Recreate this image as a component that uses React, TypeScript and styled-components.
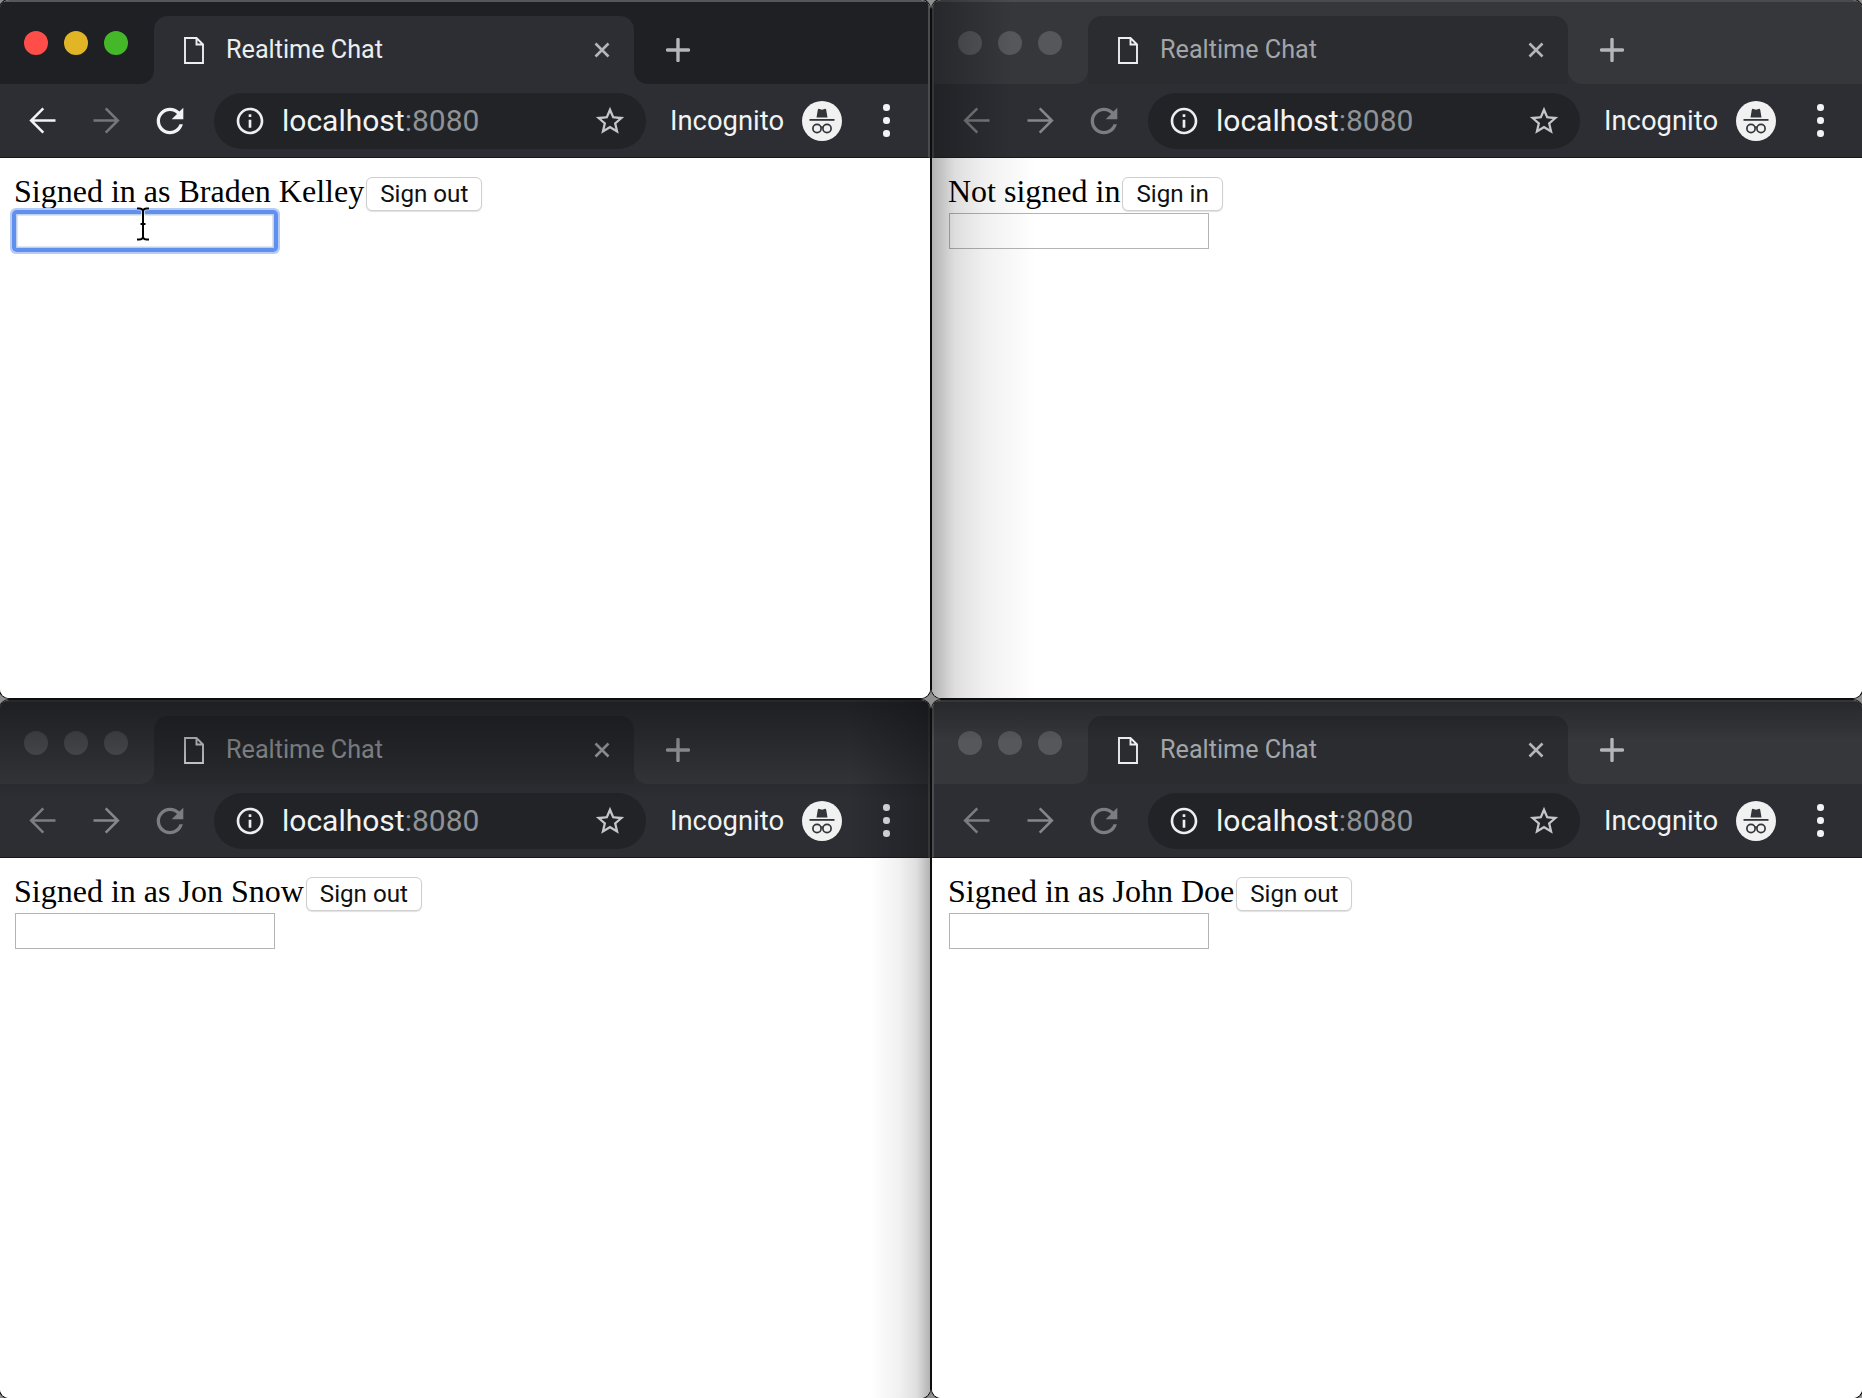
import React from "react";
import styled, { createGlobalStyle } from "styled-components";

const Global = createGlobalStyle`
  html, body { margin: 0; padding: 0; background: #8f8f8f; }
  #root { width: 1862px; height: 1398px; }
`;

const Desktop = styled.div`
  display: grid;
  grid-template-columns: 930px 930px;
  grid-template-rows: 698px 698px;
  gap: 2px;
  width: 1862px;
  height: 1398px;
  overflow: hidden;
  background: #8f8f8f;
`;

const Win = styled.section`
  position: relative;
  display: flex;
  flex-direction: column;
  overflow: hidden;
  border-radius: 9px;
  box-shadow: 0 0 0 1px #0d0d0e;
  background: #fff;
`;

type Edge = "left" | "right";

const TabStrip = styled.div<{ $focused: boolean; $edge: Edge }>`
  display: flex;
  height: 84px;
  flex: none;
  box-sizing: border-box;
  border-top: 2px solid ${(p) => (p.$focused ? "#56575a" : "#4a4b4e")};
  border-${(p) => p.$edge}: 2px solid #4a4b4e;
  background: linear-gradient(
    ${(p) => (p.$focused ? "#1f2024" : "#36373b")} 0 50px,
    #2c2e33 50px
  );
`;

const Cap = styled.div<{ $focused: boolean; $side: "left" | "right" }>`
  background: ${(p) => (p.$focused ? "#1f2024" : "#36373b")};
  ${(p) =>
    p.$side === "left"
      ? "width: 154px; flex: none; border-bottom-right-radius: 14px; padding: 29px 0 0 24px; gap: 16px;"
      : "flex: 1; border-bottom-left-radius: 14px; padding-left: 32px; padding-top: 36px;"}
  display: flex;
  align-items: flex-start;
  box-sizing: border-box;
`;

const Light = styled.span<{ $color: string }>`
  width: 24px;
  height: 24px;
  border-radius: 50%;
  background: ${(p) => p.$color};
`;

const Tab = styled.div<{ $focused: boolean }>`
  width: 480px;
  flex: none;
  box-sizing: border-box;
  margin-top: 14px;
  padding: 0 23px 0 30px;
  display: flex;
  align-items: center;
  border-radius: 14px 14px 0 0;
  background: ${(p) => (p.$focused ? "#2c2e33" : "#2b2c30")};
`;

const TabTitle = styled.span<{ $focused: boolean }>`
  flex: 1;
  margin-left: 22px;
  padding-bottom: 2px;
  font: 400 25.2px "Roboto", "Liberation Sans", sans-serif;
  color: ${(p) => (p.$focused ? "#eceef0" : "#a3a5a8")};
  white-space: nowrap;
`;

const TabIcon = styled.svg`
  flex: none;
  display: block;
`;

const Toolbar = styled.div<{ $edge: Edge }>`
  height: 74px;
  flex: none;
  box-sizing: border-box;
  display: flex;
  align-items: center;
  background: #2c2e33;
  border-bottom: 1px solid #17181a;
  border-${(p) => p.$edge}: 2px solid #4a4b4e;
  padding-left: 10px;
`;

const NavButton = styled.span`
  width: 64px;
  flex: none;
  display: flex;
  justify-content: center;
`;

const Omnibox = styled.div`
  margin-left: 12px;
  width: 432px;
  height: 56px;
  flex: none;
  box-sizing: border-box;
  border-radius: 28px;
  background: #212327;
  display: flex;
  align-items: center;
  padding: 0 19px 0 20px;
`;

const Url = styled.span`
  flex: 1;
  margin-left: 16px;
  padding-bottom: 1px;
  font: 400 30px "Roboto", "Liberation Sans", sans-serif;
  color: #f1f3f4;
`;

const Port = styled.span`
  color: #8f9296;
`;

const Badge = styled.span`
  margin-left: 24px;
  font: 400 27.4px "Roboto", "Liberation Sans", sans-serif;
  color: #f1f3f4;
  width: 132px;
  flex: none;
`;

const Avatar = styled.span`
  width: 40px;
  height: 40px;
  flex: none;
  border-radius: 50%;
  background: #f1f1f1;
  display: flex;
  align-items: center;
  justify-content: center;
`;

const Kebab = styled.span`
  margin-left: 41px;
  flex: none;
  display: flex;
  flex-direction: column;
  gap: 6.5px;
`;

const Dot = styled.i`
  display: block;
  width: 6.5px;
  height: 6.5px;
  border-radius: 50%;
  background: #f1f3f4;
`;

const Page = styled.main<{ $edge: Edge }>`
  position: relative;
  flex: 1;
  background: #fff;
  padding: 15px 15px 0 ${(p) => (p.$edge === "left" ? 16 : 14)}px;
  box-sizing: border-box;
`;

const Status = styled.div`
  display: flex;
  align-items: flex-start;
  height: 40px;
  font: 400 32px "Liberation Serif", "Times New Roman", serif;
  color: #000;
  white-space: nowrap;
  line-height: 36px;
`;

const SessionButton = styled.button`
  margin: 4px 0 0 2px;
  height: 34px;
  box-sizing: border-box;
  padding: 0 13px;
  border: 1.5px solid #cfcfcf;
  border-radius: 6px;
  background: #fff;
  box-shadow: 0 1px 1px rgba(0, 0, 0, 0.12);
  font: 400 24.2px "Roboto", "Liberation Sans", sans-serif;
  color: #111;
  line-height: 30px;
`;

const FieldWrap = styled.div`
  position: relative;
  width: 260px;
  margin-left: 1px;
`;

const Field = styled.input<{ $focused: boolean }>`
  display: block;
  width: 260px;
  height: 36px;
  box-sizing: border-box;
  padding: 0;
  background: #fff;
  outline: none;
  ${(p) =>
    p.$focused
      ? `border: 1px solid #5f8fef;
         border-radius: 2px;
         box-shadow: inset 0 0 0 1.5px #c3cfe4, 0 0 0 3px #5f8fef, 0 0 0 5px #b4ccf6;`
      : "border: 1.5px solid #b4b4b4;"}
`;

const Cursor = styled.svg`
  position: absolute;
  left: 120px;
  top: -6px;
`;

const SideShade = styled.div<{ $side: Edge }>`
  position: absolute;
  top: 158px;
  bottom: 0;
  ${(p) => p.$side}: 0;
  width: ${(p) => (p.$side === "left" ? "104px" : "60px")};
  background: linear-gradient(
    ${(p) => (p.$side === "left" ? "to right" : "to left")},
    rgba(0, 0, 0, 0.3) 0,
    rgba(0, 0, 0, 0.13) 22%,
    rgba(0, 0, 0, 0.06) 50%,
    rgba(0, 0, 0, 0) 100%
  );
  pointer-events: none;
`;

const ChromeSideShade = styled.div<{ $side: Edge }>`
  position: absolute;
  top: 0;
  height: 157px;
  ${(p) => p.$side}: 0;
  width: 80px;
  background: linear-gradient(
    ${(p) => (p.$side === "left" ? "to right" : "to left")},
    rgba(10, 11, 13, 0.35),
    rgba(10, 11, 13, 0)
  );
  pointer-events: none;
`;

const ChromeShade = styled.div<{ $height: number; $alpha: number }>`
  position: absolute;
  top: 0;
  left: 0;
  right: 0;
  height: ${(p) => p.$height}px;
  background: linear-gradient(rgba(10, 11, 13, ${(p) => p.$alpha}), rgba(10, 11, 13, 0));
  pointer-events: none;
`;

const Ic = ({ d, size, color }: { d: string; size: number; color: string }) => (
  <svg width={size} height={size} viewBox="0 0 24 24" fill={color} style={{ display: "block" }}>
    <path d={d} />
  </svg>
);

const Arrow = ({ d, color }: { d: string; color: string }) => (
  <svg width="39" height="39" viewBox="0 0 24 24" fill="none" stroke={color} strokeWidth="1.55" style={{ display: "block" }}>
    <path d={d} />
  </svg>
);

const BACK = "M20 12H5.2M12.5 4.5 5 12l7.500 7.500";
const FWD = "M4 12h14.800M11.500 4.500 19 12l-7.500 7.500";
const RELOAD =
  "M17.65 6.35C16.2 4.9 14.21 4 12 4c-4.42 0-7.99 3.58-7.99 8s3.57 8 7.99 8c3.73 0 6.84-2.55 7.73-6h-2.08c-.82 2.33-3.04 4-5.65 4-3.31 0-6-2.69-6-6s2.69-6 6-6c1.66 0 3.14.69 4.22 1.78L13 11h7V4l-2.35 2.35z";
const INFO =
  "M11 7h2v2h-2zm0 4h2v6h-2zm1-9C6.48 2 2 6.48 2 12s4.48 10 10 10 10-4.48 10-10S17.52 2 12 2zm0 18c-4.41 0-8-3.59-8-8s3.59-8 8-8 8 3.59 8 8-3.59 8-8 8z";
const STAR =
  "M22 9.24l-7.19-.62L12 2 9.19 8.63 2 9.24l5.46 4.73L5.82 21 12 17.27 18.18 21l-1.63-7.03L22 9.24zM12 15.4l-3.76 2.27 1-4.28-3.32-2.88 4.38-.38L12 6.1l1.71 4.04 4.38.38-3.32 2.88 1 4.28L12 15.4z";
const IBEAM =
  "M2 1.500h2.500c1.700 0 2.800.8 3.500 2 .7-1.200 1.800-2 3.500-2H14M8 3.500v27M2 32.500h2.500c1.700 0 2.800-.8 3.500-2 .7 1.200 1.800 2 3.500 2H14M5.500 17h5";

interface WindowProps {
  focused?: boolean;
  status: string;
  action: string;
  edge: Edge;
  sideShade?: Edge;
  shadeHeight?: number;
  shadeAlpha?: number;
}

const BrowserWindow = ({
  focused = false,
  status,
  action,
  edge,
  sideShade,
  shadeHeight,
  shadeAlpha = 0,
}: WindowProps) => {
  const light = "#55575a";
  return (
    <Win>
      <TabStrip $focused={focused} $edge={edge}>
        <Cap $focused={focused} $side="left">
          <Light $color={focused ? "#ff4e4a" : light} />
          <Light $color={focused ? "#e2b526" : light} />
          <Light $color={focused ? "#45b82a" : light} />
        </Cap>
        <Tab $focused={focused}>
          <TabIcon width="20" height="27" viewBox="0 0 20 27">
            <path
              d="M1 1h11.500L19 7.500V26H1z M12.500 1v6.500H19"
              fill="none"
              stroke="#eceef0"
              strokeWidth="1.9"
            />
          </TabIcon>
          <TabTitle $focused={focused}>Realtime Chat</TabTitle>
          <svg width="18" height="18" viewBox="0 0 18 18" style={{ display: "block" }}>
            <path d="M2.500 2.500l13 13M15.500 2.500l-13 13" stroke="#b4b6b9" strokeWidth="2.600" fill="none" />
          </svg>
        </Tab>
        <Cap $focused={focused} $side="right">
          <svg width="24" height="24" viewBox="0 0 24 24" style={{ display: "block" }}>
            <path d="M12 1.500v21M1.500 12h21" stroke="#b4b6b9" strokeWidth="3.400" strokeLinecap="round" fill="none" />
          </svg>
        </Cap>
      </TabStrip>
      <Toolbar $edge={edge}>
        <NavButton>
          <Arrow d={BACK} color={focused ? "#f1f3f4" : "#7b7d80"} />
        </NavButton>
        <NavButton>
          <Arrow d={FWD} color={focused ? "#74767a" : "#85878a"} />
        </NavButton>
        <NavButton>
          <Ic d={RELOAD} size={40} color={focused ? "#f1f3f4" : "#7b7d80"} />
        </NavButton>
        <Omnibox>
          <Ic d={INFO} size={32} color="#eceef0" />
          <Url>
            localhost<Port>:8080</Port>
          </Url>
          <Ic d={STAR} size={34} color="#c4c6c9" />
        </Omnibox>
        <Badge>Incognito</Badge>
        <Avatar>
          <svg width="40" height="40" viewBox="0 0 40 40" style={{ display: "block" }}>
            <path d="M14.500 16.500 15.800 8.800c.2-.9.9-1.100 1.600-.8l2.600.8 2.600-.8c.7-.3 1.400-.1 1.600.8l1.300 7.700z" fill="#33353a" />
            <rect x="7.500" y="18" width="25" height="1.800" fill="#33353a" />
            <circle cx="15" cy="27.500" r="4.100" fill="none" stroke="#33353a" strokeWidth="1.700" />
            <circle cx="25" cy="27.500" r="4.100" fill="none" stroke="#33353a" strokeWidth="1.700" />
            <path d="M19 26.500q1-.8 2 0" fill="none" stroke="#33353a" strokeWidth="1.500" />
          </svg>
        </Avatar>
        <Kebab>
          <Dot />
          <Dot />
          <Dot />
        </Kebab>
      </Toolbar>
      <Page $edge={edge}>
        <Status>
          {status}
          <SessionButton>{action}</SessionButton>
        </Status>
        <FieldWrap>
          <Field $focused={focused} readOnly />
          {focused && (
            <Cursor width="16" height="34" viewBox="0 0 16 34">
              <path d={IBEAM} fill="none" stroke="#fff" strokeWidth="3.500" opacity="0.8" />
              <path d={IBEAM} fill="none" stroke="#000" strokeWidth="2" />
            </Cursor>
          )}
        </FieldWrap>
      </Page>
      {sideShade && <SideShade $side={sideShade} />}
      {sideShade && <ChromeSideShade $side={sideShade} />}
      {shadeHeight ? <ChromeShade $height={shadeHeight} $alpha={shadeAlpha} /> : null}
    </Win>
  );
};

export default function App() {
  return (
    <>
      <Global />
      <Desktop>
        <BrowserWindow focused edge="right" status="Signed in as Braden Kelley" action="Sign out" />
        <BrowserWindow edge="left" status="Not signed in" action="Sign in" sideShade="left" />
        <BrowserWindow
          edge="right"
          status="Signed in as Jon Snow"
          action="Sign out"
          sideShade="right"
          shadeHeight={100}
          shadeAlpha={0.55}
        />
        <BrowserWindow
          edge="left"
          status="Signed in as John Doe"
          action="Sign out"
          shadeHeight={40}
          shadeAlpha={0.35}
        />
      </Desktop>
    </>
  );
}
